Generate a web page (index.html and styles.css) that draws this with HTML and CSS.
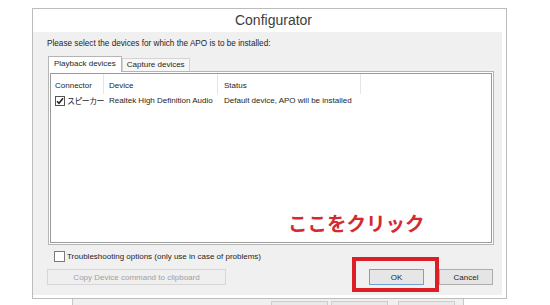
FILE: index.html
```html
<!DOCTYPE html>
<html lang="ja">
<head>
    <meta charset="UTF-8">
    <meta name="viewport" content="width=device-width, initial-scale=1.0">
    <title>Configurator</title>
    <link rel="stylesheet" href="styles.css">
</head>
<body>
    <div class="dialog">
        <div class="titlebar">Configurator</div>
        <div class="client">
            <p class="prompt">Please select the devices for which the APO is to be installed:</p>
            <div class="tabs">
                <span class="tab active">Playback devices</span>
                <span class="tab">Capture devices</span>
            </div>
            <div class="panel">
                <div class="list">
                    <div class="list-head">
                        <span class="col c1">Connector</span>
                        <span class="col c2">Device</span>
                        <span class="col c3">Status</span>
                        <span class="col c4"></span>
                    </div>
                    <div class="list-row">
                        <span class="col c1">
                            <span class="box">
                                <svg width="8" height="8" viewBox="0 0 8 8"><path d="M1 4.2 L3 6.3 L7 1.3" fill="none" stroke="#222" stroke-width="1.5"/></svg>
                            </span>
                            <span class="jp">スピーカー</span>
                        </span>
                        <span class="col c2">Realtek High Definition Audio</span>
                        <span class="col c3">Default device, APO will be installed</span>
                    </div>
                </div>
            </div>
            <label class="check-row"><span class="box"></span>Troubleshooting options (only use in case of problems)</label>
            <div class="buttons">
                <button class="btn copy" disabled>Copy Device command to clipboard</button>
                <button class="btn ok">OK</button>
                <button class="btn cancel">Cancel</button>
            </div>
        </div>
        <div class="note">ここをクリック</div>
        <div class="highlight"></div>
    </div>
    <div class="behind">
        <span class="behind-btn"></span>
        <span class="behind-btn"></span>
        <span class="behind-btn"></span>
    </div>
</body>
</html>
```
FILE: styles.css
```css
body {
    margin: 0;
    background: #fff;
    font-family: "Liberation Sans", Arial, sans-serif;
    font-size: 8px;
    color: #1e1e1e;
}
.dialog {
    position: relative;
    box-sizing: border-box;
    width: 475px;
    height: 291px;
    margin: 8px 0 0 32px;
    border: 1px solid #bcbcbc;
    background: #fff;
}
.titlebar {
    height: 23px;
    line-height: 23px;
    padding-left: 8px;
    text-align: center;
    font-size: 14px;
    color: #3c3c3c;
}
.client {
    box-sizing: border-box;
    height: 263px;
    margin-right: 4px;
    padding: 7px 9px 0 14px;
    background: #f0f0f0;
}
.prompt {
    margin: 0;
    line-height: 10px;
    font-size: 8.2px;
}
.tabs {
    display: flex;
    align-items: flex-end;
    height: 15px;
    margin-top: 7px;
    padding-left: 1px;
}
.tab {
    box-sizing: border-box;
    height: 13px;
    padding: 0 4px;
    line-height: 12px;
    border: 1px solid #d4d4d4;
    border-bottom: none;
    background: #f7f7f7;
}
.tab.active {
    position: relative;
    z-index: 1;
    height: 16px;
    margin-bottom: -1px;
    padding: 0 5px;
    line-height: 14px;
    border-color: #b5b5b5;
    background: #fff;
}
.panel {
    box-sizing: border-box;
    width: 446px;
    height: 174px;
    margin-left: 1px;
    padding: 1px;
    border: 1px solid #b5b5b5;
    background: #fff;
}
.list {
    box-sizing: border-box;
    height: 100%;
    border: 1px solid #9a9a9a;
    background: #fff;
}
.list-head,
.list-row {
    display: flex;
}
.list-head {
    height: 20px;
}
.list-head .col {
    padding-top: 4px;
    line-height: 16px;
    border-right: 1px solid #e5e5e5;
}
.list-row {
    height: 14px;
    line-height: 14px;
}
.col {
    box-sizing: border-box;
    flex: none;
    padding-left: 5px;
    white-space: nowrap;
    overflow: hidden;
}
.c1 { width: 53px; padding-left: 4px; }
.c2 { width: 114px; }
.c3 { width: 143px; padding-left: 6px; }
.c4 { flex: 1; border-right: none !important; }
.list-row .c1 {
    display: flex;
    align-items: center;
    gap: 2px;
}
.box {
    box-sizing: border-box;
    display: inline-flex;
    align-items: center;
    justify-content: center;
    width: 10px;
    height: 10px;
    border: 1px solid #555;
    background: #fff;
}
.jp {
    font-family: "Noto Sans CJK JP", sans-serif;
    letter-spacing: -0.6px;
}
.check-row {
    display: flex;
    align-items: center;
    gap: 2px;
    height: 13px;
    margin-top: 5px;
    padding-left: 7px;
}
.check-row .box {
    width: 11px;
    height: 11px;
    border-color: #7a7a7a;
}
.buttons {
    display: flex;
    margin-top: 6px;
}
.btn {
    box-sizing: border-box;
    height: 16px;
    padding: 0;
    font-family: inherit;
    font-size: 8px;
    color: #1e1e1e;
    border: 1px solid #adadad;
    background: #e5e5e5;
}
.copy {
    width: 179px;
    color: #a0a0a0;
    border-color: #d6d6d6;
    background: #efefef;
}
.ok {
    width: 55px;
    margin-left: auto;
    border-color: #6fa3d6;
    background: #e6e6e6;
}
.cancel {
    width: 54px;
    margin-left: 15px;
}
.note {
    position: absolute;
    left: 255px;
    top: 204px;
    font-family: "Noto Sans CJK JP", sans-serif;
    font-size: 19.5px;
    font-weight: bold;
    line-height: 20px;
    color: #d42a30;
}
.highlight {
    position: absolute;
    left: 319px;
    top: 248px;
    box-sizing: border-box;
    width: 87px;
    height: 35px;
    border: 4px solid #dc1f27;
}
.behind {
    display: flex;
    box-sizing: border-box;
    width: 392px;
    height: 8px;
    margin-left: 72px;
    padding: 2px 0 0 198px;
    border-left: 1px solid #c8c8c8;
    border-right: 1px solid #c8c8c8;
    background: #f0f0f0;
}
.behind-btn {
    width: 55px;
    border: 1px solid #cdcdcd;
    border-bottom: none;
    background: #e9e9e9;
    margin-right: 3px;
}
.behind-btn:last-child {
    margin-left: 7px;
}
```
